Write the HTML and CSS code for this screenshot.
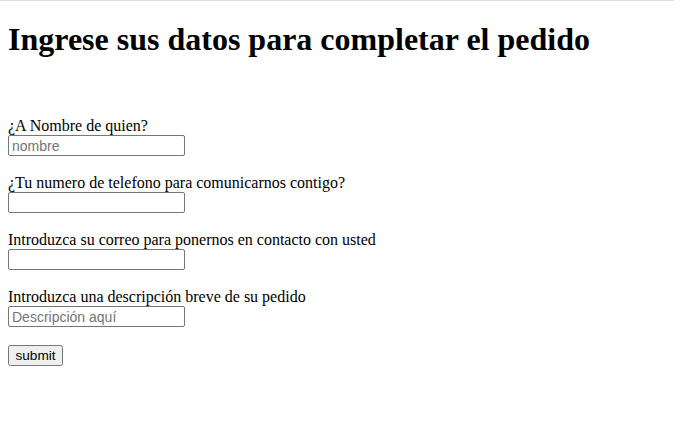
FILE: index.html
```html
<!DOCTYPE html>
<html lang="es">
<head>
<meta charset="utf-8">
<title>Pedido</title>
<link rel="stylesheet" href="styles.css">
</head>
<body>
<h1 class="title">Ingrese sus datos para completar el pedido</h1>
<form class="order-form">
<label for="nombre">¿A Nombre de quien?</label><br>
<input class="field" type="text" id="nombre" placeholder="nombre"><br><br>
<label for="tel">¿Tu numero de telefono para comunicarnos contigo?</label><br>
<input class="field" type="tel" id="tel"><br><br>
<label for="correo">Introduzca su correo para ponernos en contacto con usted</label><br>
<input class="field" type="email" id="correo"><br><br>
<label for="desc">Introduzca una descripción breve de su pedido</label><br>
<input class="field" type="text" id="desc" placeholder="Descripción aquí"><br><br>
<input class="submit" type="submit" value="submit">
</form>
</body>
</html>
```
FILE: styles.css
```css
html {
  border-top: 1px solid #dcdfe3;
}
body {
  margin: 0 8px 8px;
  font-family: "Liberation Serif", serif;
  font-size: 16px;
  color: #000;
  background: #fff;
}
.title {
  font-size: 32px;
  font-weight: bold;
  margin: 20px 0 0;
}
.order-form {
  margin-top: 59px;
}
.order-form label {
  line-height: 18px;
}
.field {
  font-family: "Liberation Sans", Arial, sans-serif;
  font-size: 14px;
  width: 177px;
  height: 21px;
  box-sizing: border-box;
  padding: 1px 3px;
  border: 1px solid #767676;
  border-radius: 2px;
  vertical-align: top;
}
.field::placeholder {
  color: #757575;
}
.submit {
  font-family: "Liberation Sans", Arial, sans-serif;
  font-size: 13.6px;
  width: 55px;
  height: 21px;
  box-sizing: border-box;
  padding: 1px 4px;
  vertical-align: top;
}
```
